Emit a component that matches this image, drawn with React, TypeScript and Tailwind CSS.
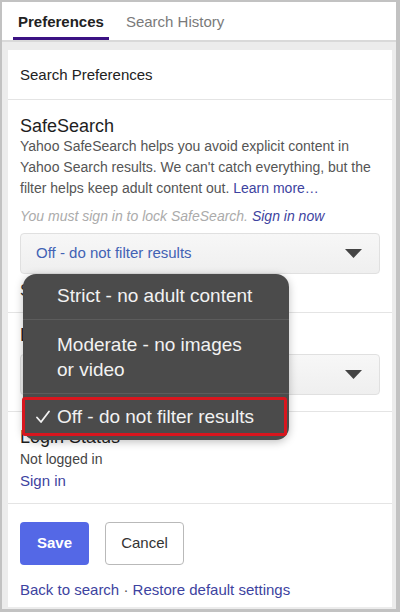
import React from "react";

function Arrow() {
  return (
    <svg width="17" height="9" viewBox="0 0 17 9" className="shrink-0">
      <path d="M0 0 H17 L8.5 9 Z" fill="#444" />
    </svg>
  );
}

function Select({ text, color }: { text: string; color: string }) {
  return (
    <div className="h-[41px] rounded-[4px] border border-[#e0e0e0] bg-gradient-to-b from-[#f7f7f7] to-[#efefef] flex items-center justify-between pl-[15px] pr-[17px]">
      <span className="text-[15px]" style={{ color }}>
        {text}
      </span>
      <Arrow />
    </div>
  );
}

export default function App() {
  return (
    <div className="relative w-[400px] h-[612px] overflow-hidden border-t-2 border-l-2 border-r-4 border-b-[3px] border-[#c2c2c2] bg-[#ececec] font-['Liberation_Sans',Arial,sans-serif] flex flex-col">
      {/* Tabs */}
      <div className="h-[40px] shrink-0 bg-white border-b-2 border-[#d9d9d9] flex pl-[11px]">
        <div className="flex items-center pt-[6px] px-[5px] border-b-[3px] border-[#3b1283] text-[15px] font-bold text-[#222]">
          Preferences
        </div>
        <div className="flex items-center pt-[6px] px-[5px] ml-[12px] border-b-[3px] border-transparent text-[15px] text-[#7a7a7a]">
          Search History
        </div>
      </div>

      {/* Main */}
      <div className="flex-1 pt-[8px] pl-[6px] pr-[4px] pb-[2px] flex flex-col">
        <div className="flex-1 bg-white flex flex-col">
          <div className="h-[50px] pt-[2px] px-[12px] flex items-center text-[15px] text-[#222] border-b border-[#e4e4e4]">
            Search Preferences
          </div>

          {/* SafeSearch */}
          <div className="px-[12px] pt-[16px] pb-[11px] border-b border-[#e4e4e4]">
            <div className="text-[18px] leading-[20px] text-[#1e1e1e]">SafeSearch</div>
            <p className="text-[14px] leading-[21px] text-[#555]">
              Yahoo SafeSearch helps you avoid explicit content in Yahoo Search results. We can't
              catch everything, but the filter helps keep adult content out.{" "}
              <span className="text-[#3d43a0]">Learn more…</span>
            </p>
            <p className="mt-[7px] text-[14px] leading-[21px] italic text-[#ababab]">
              You must sign in to lock SafeSearch.{" "}
              <span className="text-[#3d43a0]">Sign in now</span>
            </p>
            <div className="mt-[6px]">
              <Select text="Off - do not filter results" color="#4262b4" />
            </div>
            <div className="mt-[7px] text-[17px] leading-[20px] text-[#333]">
              Search suggestions
            </div>
          </div>

          {/* Language */}
          <div className="px-[12px] pt-[12px] pb-[16px] border-b border-[#e4e4e4]">
            <div className="text-[18px] leading-[20px] text-[#1e1e1e]">Language</div>
            <div className="mt-[9px]">
              <Select text="English" color="#4262b4" />
            </div>
          </div>

          {/* Login */}
          <div className="px-[12px] pt-[15px] pb-[12px] border-b border-[#e4e4e4]">
            <div className="text-[18px] leading-[20px] text-[#1e1e1e]">Login Status</div>
            <div className="mt-[2px] text-[14px] leading-[20px] text-[#444]">Not logged in</div>
            <div className="mt-[2px] text-[15px] leading-[20px] text-[#3d43a0]">Sign in</div>
          </div>

          {/* Buttons */}
          <div className="px-[12px] pt-[18px] pb-[4px]">
            <div className="flex gap-[16px]">
              <button className="w-[69px] h-[43px] rounded-[4px] bg-[#5468e6] text-white font-bold text-[15px]">
                Save
              </button>
              <button className="w-[79px] h-[43px] rounded-[4px] bg-white border border-[#b9b9b9] text-[#333] text-[15px]">
                Cancel
              </button>
            </div>
            <div className="mt-[15px] text-[15px] leading-[20px] text-[#3d43a0]">
              Back to search <span className="text-[#555]">·</span> Restore default settings
            </div>
          </div>
        </div>
      </div>

      {/* Dropdown picker overlay */}
      <div className="absolute left-[21px] top-[272px] w-[266px] h-[166px] rounded-[13px] bg-[#4b4b4b] shadow-[0_2px_8px_rgba(0,0,0,0.25)] flex flex-col text-[19px] text-[#f2f2f2] overflow-hidden">
        <div className="h-[46px] flex items-center pl-[34px] border-b border-[#5c5c5c]">
          Strict - no adult content
        </div>
        <div className="h-[74px] flex items-center pl-[34px] border-b border-[#5c5c5c] leading-[25px]">
          Moderate - no images
          <br />
          or video
        </div>
        <div className="flex-1 flex items-center pl-[13px]">
          <svg width="14" height="14" viewBox="0 0 14 14" className="mr-[7px]">
            <path d="M1 7.5 L5 12 L13 1.5" fill="none" stroke="#f2f2f2" strokeWidth="1.8" strokeLinecap="round" strokeLinejoin="round" />
          </svg>
          Off - do not filter results
        </div>
      </div>
      <div className="absolute left-[20px] top-[395px] w-[265px] h-[39px] rounded-[3px] border-[3px] border-[#d8161e]" />
    </div>
  );
}
